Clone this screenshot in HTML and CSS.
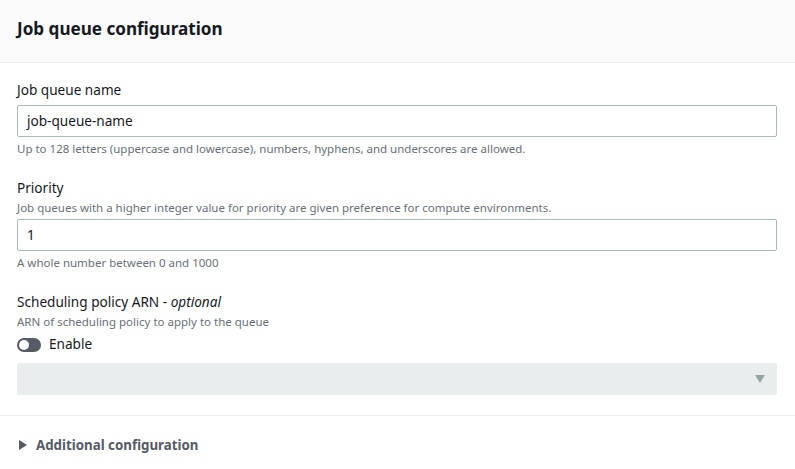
FILE: index.html
```html
<!DOCTYPE html>
<html lang="en">
<head>
<meta charset="utf-8">
<link rel="stylesheet" href="styles.css">
</head>
<body>
<div class="panel">
  <div class="header"><h2 class="title">Job queue configuration</h2></div>
  <div class="content">
    <div class="field">
      <label class="label">Job queue name</label>
      <div class="input">job-queue-name</div>
      <div class="hint">Up to 128 letters (uppercase and lowercase), numbers, hyphens, and underscores are allowed.</div>
    </div>
    <div class="field">
      <label class="label">Priority</label>
      <div class="desc">Job queues with a higher integer value for priority are given preference for compute environments.</div>
      <div class="input">1</div>
      <div class="hint">A whole number between 0 and 1000</div>
    </div>
    <div class="field">
      <label class="label">Scheduling policy ARN - <i>optional</i></label>
      <div class="desc">ARN of scheduling policy to apply to the queue</div>
      <div class="toggle-row"><span class="toggle"><span class="knob"></span></span><span class="toggle-label">Enable</span></div>
      <div class="select"><svg class="caret" width="10" height="8" viewBox="0 0 10 8"><path d="M0 0 H10 L5 8 Z" fill="#95a5a6"/></svg></div>
    </div>
  </div>
  <div class="expander">
    <svg class="tri" width="8" height="10" viewBox="0 0 8 10"><path d="M0 0 L8 5 L0 10 Z" fill="#545b64"/></svg>
    <span class="exp-label">Additional configuration</span>
  </div>
</div>
</body>
</html>
```
FILE: styles.css
```css
* { box-sizing: border-box; }
html, body { margin: 0; padding: 0; background: #fff; }
body { font-family: "Noto Sans", "Open Sans", sans-serif; color: #16191f; }
.panel { width: 795px; }
.header { background: #fafafa; border-bottom: 1px solid #eaeded; height: 63px; display: flex; align-items: center; padding: 0 18px 4px 17px; }
.title { margin: 0; font-size: 17.1px; font-weight: 700; line-height: 22px; color: #16191f; }
.content { padding: 16px 18px 20px 17px; display: flex; flex-direction: column; gap: 20px; border-bottom: 1px solid #eaeded; }
.field { display: flex; flex-direction: column; }
.label { font-size: 13.6px; line-height: 22px; color: #16191f; }
.label i { font-style: italic; }
.field > .label + .input { margin-top: 4px; }
.desc { font-size: 11.5px; line-height: 16px; color: #687078; margin-top: 1px; }
.desc + .input { margin-top: 3px; }
.input { height: 32px; border: 1px solid #aab7b8; border-radius: 2px; padding: 0 9px; font-size: 13.6px; line-height: 30px; color: #16191f; }
.hint { font-size: 11.5px; line-height: 16px; color: #687078; margin-top: 4px; }
.toggle-row { display: flex; align-items: center; height: 22px; margin-top: 3px; }
.toggle { width: 24px; height: 14px; border-radius: 7px; background: #545b64; position: relative; margin-right: 8px; margin-top: 1px; }
.knob { position: absolute; left: 2px; top: 2px; width: 10px; height: 10px; border-radius: 50%; background: #fff; }
.toggle-label { font-size: 13.6px; line-height: 22px; }
.select { height: 32px; margin-top: 8px; background: #eaeded; border-radius: 2px; display: flex; align-items: center; justify-content: flex-end; padding-right: 12px; }
.expander { display: flex; align-items: center; padding: 0 18px 0 19px; height: 58px; }
.tri { margin-right: 9px; }
.exp-label { font-size: 13.3px; font-weight: 700; color: #545b64; line-height: 22px; }
```
